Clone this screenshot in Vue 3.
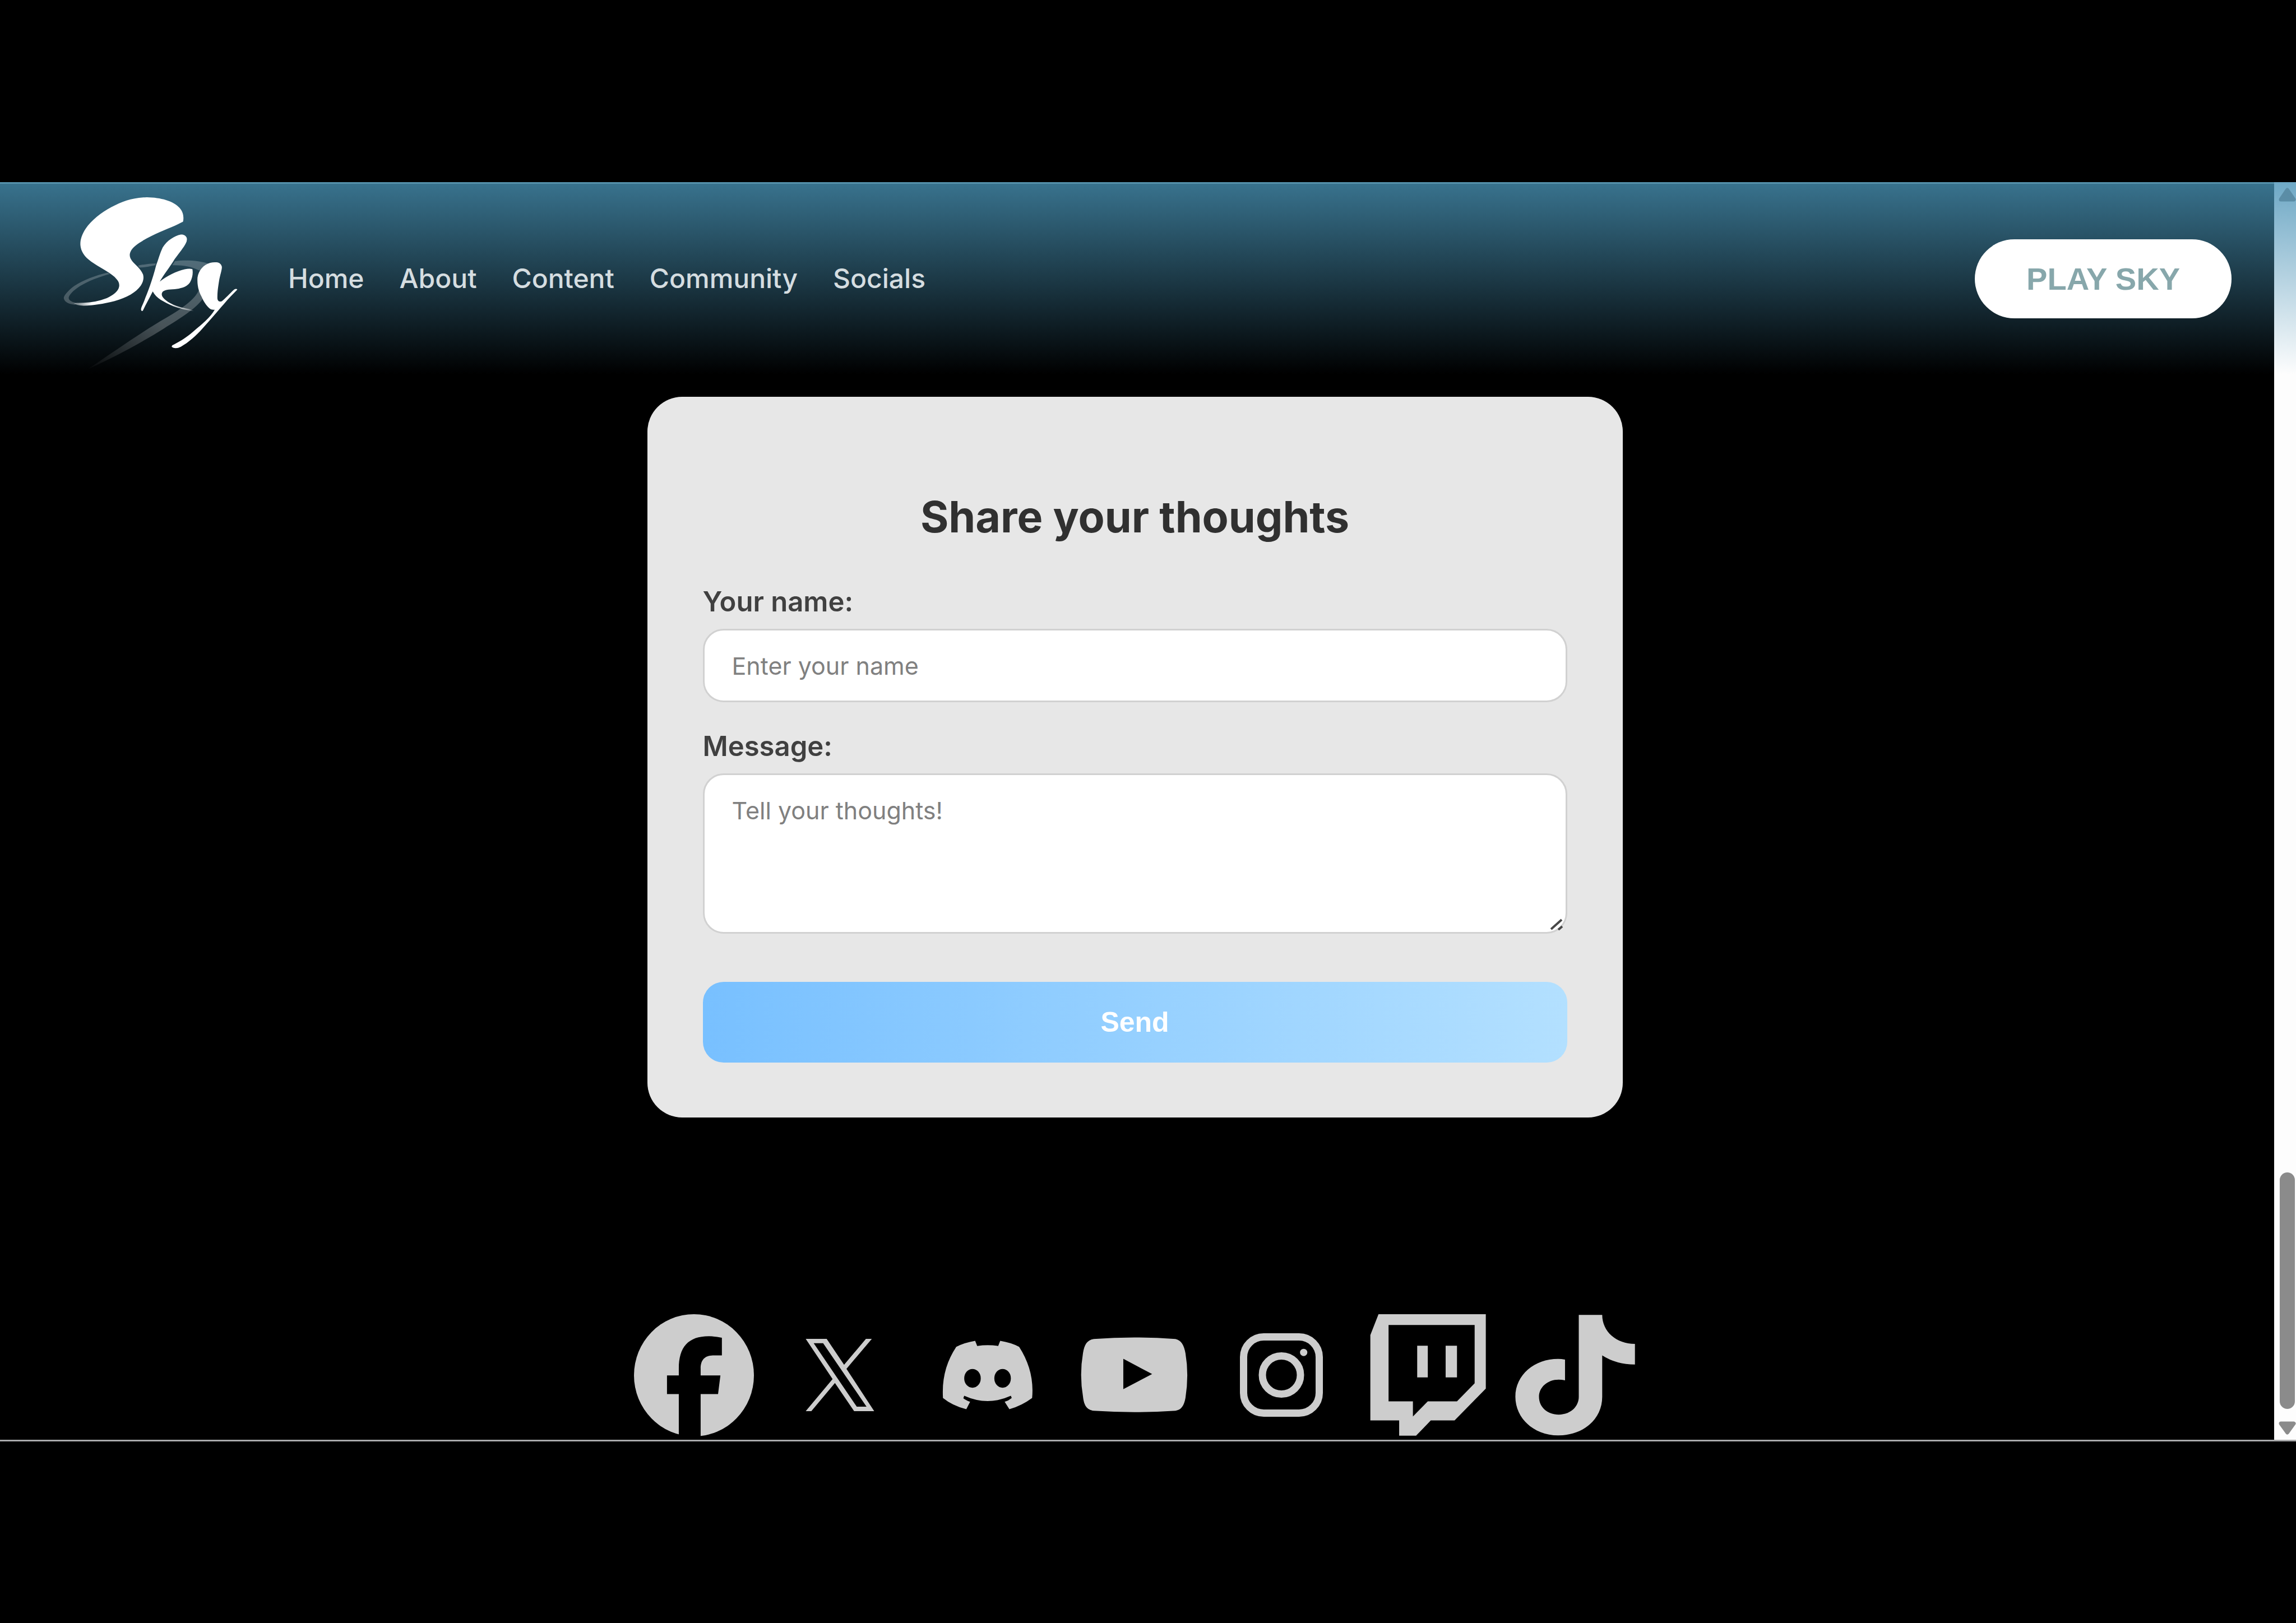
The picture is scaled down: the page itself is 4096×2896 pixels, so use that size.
<script setup>
import { ref } from 'vue'

const name = ref('')
const message = ref('')
const links = ['Home', 'About', 'Content', 'Community', 'Socials']
</script>

<template>
  <div class="page">
    <div class="frame">
      <div class="content">
        <header class="header">
          <a class="logo" href="#" aria-label="Sky">
            <svg viewBox="105 81 1144 1170" aria-hidden="true">
              <defs>
                <radialGradient id="tail" gradientUnits="userSpaceOnUse" cx="170" cy="835" r="125">
                  <stop offset="0" stop-color="#fff" stop-opacity="0.3" />
                  <stop offset="1" stop-color="#fff" />
                </radialGradient>
                <radialGradient id="leg" gradientUnits="userSpaceOnUse" cx="955" cy="880" r="165">
                  <stop offset="0" stop-color="#fff" stop-opacity="0.1" />
                  <stop offset="0.4" stop-color="#fff" stop-opacity="0.6" />
                  <stop offset="1" stop-color="#fff" />
                </radialGradient>
                <linearGradient id="comet" gradientUnits="userSpaceOnUse" x1="270" y1="1252" x2="740" y2="960">
                  <stop offset="0" stop-color="#fff" stop-opacity="0.02" />
                  <stop offset="1" stop-color="#fff" stop-opacity="0.24" />
                </linearGradient>
              </defs>
              <g fill="#fff" fill-opacity="0.22">
                <path d="M395 628C300 650 200 690 150 738C122 765 108 785 112 797C118 818 140 831 180 836L205 824C160 822 136 802 145 783C170 730 280 670 412 636Z" />
                <path d="M592 582Q650 570 708 568L704 580Q650 593 602 595Z" />
                <path d="M832 553C900 544 990 548 1060 572L990 614C940 588 880 578 815 580Z" />
              </g>
              <path fill="url(#comet)" d="M986 742C962 800 880 858 780 918C620 1010 450 1130 270 1252C430 1180 600 1090 760 990C880 915 966 862 1014 795Z" />
              <path fill="url(#tail)" d="M885 295C890 265 886 235 862 208C820 162 740 141 650 139C560 141 490 165 420 203C350 240 290 290 255 340C225 385 217 420 219 450C222 490 245 525 290 557C340 592 400 620 440 655C465 680 473 695 470 718C465 750 430 775 390 793C340 812 290 822 240 823Q200 823 175 828Q195 841 240 842C300 840 370 830 440 812C520 790 580 755 610 712C625 690 632 665 625 640C612 605 580 582 555 553C540 533 533 515 545 490C560 455 620 420 680 390C750 355 820 332 875 302Q883 298 885 295Z" />
              <path fill="url(#leg)" d="M908 402C900 385 885 380 870 381C830 388 780 420 752 465C735 500 725 540 710 580C690 660 665 730 640 790C625 835 612 850 612 868Q614 882 624 874C645 830 668 790 688 750C710 795 760 818 820 845Q880 868 955 878Q930 862 905 860Q840 848 800 825C755 800 738 775 750 755C760 740 790 736 830 735C880 730 915 715 930 690C945 660 950 635 945 605Q925 600 895 606C840 618 780 650 733 686C760 640 800 590 830 540C860 500 888 465 901 440Q913 420 908 402Z" />
              <path fill="#fff" d="M1060 564C1020 575 985 610 978 660C975 710 985 750 1005 785C1020 820 1040 850 1065 866Q1080 870 1090 868C1060 920 1010 960 950 1010C910 1045 870 1070 825 1094Q808 1100 812 1110Q835 1126 870 1108C920 1080 970 1035 1010 990C1060 935 1110 875 1150 830C1180 795 1210 765 1236 738Q1230 728 1215 738C1185 765 1160 795 1137 812C1120 820 1108 812 1107 795C1106 750 1112 720 1118 680C1125 640 1137 610 1136 590C1130 565 1110 560 1090 561Q1075 561 1060 564Z" />
            </svg>
          </a>
          <nav class="nav" aria-label="Main">
            <a v-for="link in links" :key="link" href="#">{{ link }}</a>
          </nav>
          <button class="play" type="button">PLAY SKY</button>
        </header>

        <form class="card" @submit.prevent>
          <h1>Share your thoughts</h1>
          <label for="name">Your name:</label>
          <input id="name" v-model="name" type="text" placeholder="Enter your name" />
          <label for="message">Message:</label>
          <div class="message">
            <textarea id="message" v-model="message" placeholder="Tell your thoughts!"></textarea>
            <svg class="grip" viewBox="0 0 24 22" aria-hidden="true">
              <path d="M2 20L21 3M15 21L22 15" />
            </svg>
          </div>
          <button class="send" type="submit">Send</button>
        </form>

        <nav class="socials" aria-label="Social media">
          <a href="#" aria-label="Facebook">
            <svg viewBox="0 0 216 218">
              <ellipse cx="108" cy="109" rx="107" ry="109" />
              <path class="hole" transform="matrix(.52656 0 0 .27521 -15.4 -23.95)" d="M183 900V605H143V484H183V440C183 300 215 230 285 230Q310 230 329 240V354H300C270 354 257 385 257 440V484H324L316 605H257V900Z" />
            </svg>
          </a>
          <a href="#" aria-label="X">
            <svg viewBox="0 0 216 218">
              <path fill-rule="evenodd" transform="matrix(.52656 0 0 .27521 -277.4 -23.95)" d="M613 247H684L743 415L817 247H837L751 441L845 716H777L712 533L632 716H613L704 508ZM640 275L786 687H819L672 275Z" />
            </svg>
          </a>
          <a href="#" aria-label="Discord">
            <svg viewBox="0 0 216 218">
              <g transform="matrix(.52656 0 0 .27521 -539.4 -23.95)">
                <path d="M1187 260Q1150 272 1123 299C1090 395 1074 500 1078 630Q1110 680 1157 703L1170 655Q1155 645 1147 632L1150 616Q1230 685 1308 616L1311 630Q1300 648 1287 655L1303 703Q1345 680 1380 630C1386 510 1370 400 1336 299Q1310 272 1272 260L1265 293Q1230 283 1194 293Z" />
                <ellipse class="hole" cx="1178" cy="503" rx="28" ry="61" />
                <ellipse class="hole" cx="1280" cy="503" rx="28" ry="61" />
              </g>
            </svg>
          </a>
          <a href="#" aria-label="YouTube">
            <svg viewBox="0 0 216 218">
              <path fill-rule="evenodd" transform="matrix(.34752 0 0 .27521 -17 -23.95)" d="M150 248Q358 228 570 248C600 256 614 290 621 340Q640 480 621 630C614 680 600 706 570 713Q358 731 150 713C115 706 100 680 95 620Q76 480 95 340C102 285 115 256 150 248ZM302 376V573L450 475Z" />
            </svg>
          </a>
          <a href="#" aria-label="Instagram">
            <svg viewBox="0 0 216 218">
              <g class="outline">
                <rect x="40.5" y="40.5" width="135" height="136" rx="36" />
                <circle cx="108" cy="108.500" r="34" />
              </g>
              <circle cx="147.700" cy="68.200" r="6.500" />
            </svg>
          </a>
          <a href="#" aria-label="Twitch">
            <svg viewBox="0 0 216 218">
              <path fill-rule="evenodd" transform="matrix(.33172 0 0 .27521 -20.9 -23.95)" d="M121 87H698V569L530 776H402L323 875H232V776H77V222ZM175 157V652H306V750L386 652H543L638 535V157ZM329 291H386V497H329ZM482 291H543V497H482Z" />
            </svg>
          </a>
          <a href="#" aria-label="TikTok">
            <svg viewBox="0 0 216 218">
              <path transform="matrix(.33172 0 0 .27521 -282.9 -23.95)" d="M1198 92H1324C1324 200 1400 280 1500 280V413Q1400 413 1324 354V622C1324 770 1220 873 1087 873C955 873 857 760 857 622C857 480 960 377 1087 377Q1105 377 1124 381V516Q1107 511 1090 511C1030 511 984 560 984 622C984 690 1030 738 1090 738C1150 738 1198 690 1198 622Z" />
            </svg>
          </a>
        </nav>
      </div>

      <div class="scrollbar" aria-hidden="true">
        <svg class="arrow up" viewBox="0 0 31 25"><path d="M15.500 4L27 21H4Z" /></svg>
        <div class="thumb"></div>
        <svg class="arrow down" viewBox="0 0 31 25"><path d="M15.500 20L27 4H4Z" /></svg>
      </div>
    </div>
  </div>
</template>

<style>
body {
  background: #000;
}
</style>

<style scoped>
.page {
  box-sizing: border-box;
  min-height: 100vh;
  padding-top: 325px;
  background: #000;
  font-family: Inter, "Liberation Sans", sans-serif;
}

.frame {
  display: flex;
  border-bottom: 3px solid #a9aaab;
}

.content {
  flex: 1;
  min-width: 0;
  display: flex;
  flex-direction: column;
  align-items: center;
  padding-bottom: 6px;
}

.header {
  box-sizing: border-box;
  align-self: stretch;
  display: flex;
  align-items: center;
  padding: 8px 76px 10px 112px;
  border-top: 3px solid #5591ab;
  background: linear-gradient(#38728d, #000);
}

.logo svg {
  display: block;
  width: 315px;
  height: 322px;
}

.nav {
  display: flex;
  gap: 63px;
  margin-left: 87px;
}

.nav a {
  color: #d5dde0;
  font-size: 48px;
  font-weight: 500;
  line-height: 60px;
  text-decoration: none;
}

.play {
  margin-left: auto;
  padding: 0 92px;
  height: 141px;
  border: 0;
  border-radius: 71px;
  background: #fff;
  color: #87a7ab;
  font: bold 56px "Liberation Sans", sans-serif;
}

.card {
  box-sizing: border-box;
  display: flex;
  flex-direction: column;
  width: 100%;
  max-width: 1740px;
  margin: 40px 8px 0 0;
  padding: 166px 99px 98px;
  border-radius: 62px;
  background: #e7e7e7;
}

h1 {
  margin: 0 0 74px;
  color: #303030;
  font-size: 77px;
  font-weight: 700;
  line-height: 96px;
  text-align: center;
}

label {
  margin-bottom: 18px;
  color: #404040;
  font-size: 49px;
  font-weight: 600;
  line-height: 60px;
}

input,
textarea {
  display: block;
  box-sizing: border-box;
  width: 100%;
  border: 3px solid #d1d1d1;
  border-radius: 37px;
  background: #fff;
  color: #303030;
  font-family: inherit;
  font-size: 43px;
  line-height: 54px;
}

input {
  height: 131px;
  margin-bottom: 49px;
  padding: 0 49px;
}

textarea {
  height: 286px;
  padding: 36px 49px;
  resize: none;
  overflow: hidden;
}

input::placeholder,
textarea::placeholder {
  color: #808080;
  opacity: 1;
}

.message {
  position: relative;
  margin-bottom: 86px;
}

.grip {
  position: absolute;
  right: 7px;
  bottom: 6px;
  width: 24px;
  height: 22px;
  fill: none;
  stroke: #484848;
  stroke-width: 4;
}

.send {
  height: 144px;
  border: 0;
  border-radius: 37px;
  background: linear-gradient(90deg, #78c0ff, #b3e0ff);
  color: #fff;
  font: bold 50px "Liberation Sans", sans-serif;
}

.socials {
  display: flex;
  gap: 46px;
  margin: 351px 9px 0 0;
}

.socials svg {
  display: block;
  width: 216px;
  height: 218px;
  fill: #cdcdcd;
}

.socials .hole {
  fill: #000;
}

.socials .outline {
  fill: none;
  stroke: #cdcdcd;
  stroke-width: 13;
}

.scrollbar {
  box-sizing: border-box;
  display: flex;
  flex-direction: column;
  align-items: center;
  width: 39px;
  padding: 10px 0 8px 8px;
  background: linear-gradient(#6ea8c5, #fdfdfd 343px);
}

.arrow {
  width: 31px;
  height: 25px;
  stroke-width: 7;
  stroke-linejoin: round;
}

.up {
  fill: #5b8da6;
  stroke: #5b8da6;
}

.down {
  fill: #8b8b8b;
  stroke: #8b8b8b;
}

.thumb {
  width: 27px;
  height: 422px;
  margin: auto 0 22px;
  border-radius: 14px;
  background: #8b8b8b;
}
</style>
